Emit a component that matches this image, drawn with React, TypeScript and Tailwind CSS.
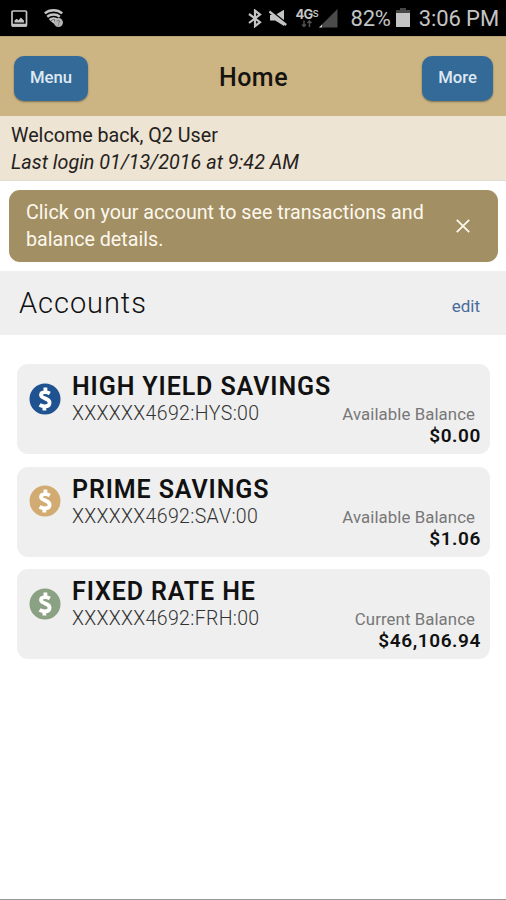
type Account = {
  name: string;
  number: string;
  balanceLabel: string;
  balance: string;
  iconClass: string;
};

const accounts: Account[] = [
  {
    name: "HIGH YIELD SAVINGS",
    number: "XXXXXX4692:HYS:00",
    balanceLabel: "Available Balance",
    balance: "$0.00",
    iconClass: "text-[#1f5291]",
  },
  {
    name: "PRIME SAVINGS",
    number: "XXXXXX4692:SAV:00",
    balanceLabel: "Available Balance",
    balance: "$1.06",
    iconClass: "text-[#d2ab72]",
  },
  {
    name: "FIXED RATE HE",
    number: "XXXXXX4692:FRH:00",
    balanceLabel: "Current Balance",
    balance: "$46,106.94",
    iconClass: "text-[#8ba183]",
  },
];

function StatusBar() {
  return (
    <div className="flex h-9 items-center bg-black pl-[10px] pr-[7px] text-[#c4c4c4]">
      <svg width="18" height="18" viewBox="0 0 18 18" className="mt-px" aria-hidden>
        <rect x="2" y="1" width="14.5" height="15" rx="1" fill="none" stroke="currentColor" strokeWidth="1.7" />
        <path d="M2 15.2h14.5" stroke="currentColor" strokeWidth="3" />
        <path d="M4.5 12.5v-2l2.2-1.8 1.8 1.5 2.4-2.7 3.1 3.3v1.7z" fill="currentColor" />
      </svg>
      <svg width="20" height="19" viewBox="0 0 20 19" className="ml-4" fill="none" stroke="currentColor" aria-hidden>
        <path d="M.8 4.4C5.5.3 13.5.3 18.2 4.4M3.2 7.7c3.5-2.9 9.1-2.9 12.6 0M5.6 11c2.2-1.9 5.6-1.9 7.8 0" strokeWidth="2.5" />
        <path d="M6.5 12l3.5-1.5 1 5z" fill="currentColor" stroke="none" />
        <circle cx="14.5" cy="13.6" r="4.5" fill="#b4b4b4" stroke="none" />
        <path d="M13 12.4c.2-1.4 2.8-1.3 2.7.2-.1.9-1.2.9-1.2 1.9M14.5 15.5v1" stroke="#666" strokeWidth="1" />
      </svg>

      <div className="ml-auto flex items-center">
        <svg width="14" height="19" viewBox="0 0 14 19" fill="none" stroke="currentColor" strokeWidth="2.2" aria-hidden>
          <path d="M1 5l11 8.2-5 4V1.6l5 4L1 14" />
        </svg>
        <svg width="18" height="18" viewBox="0 0 18 18" className="ml-[7px]" aria-hidden>
          <path d="M1 6h5.2L15 .8V17l-8.8-5.4H1z" fill="currentColor" />
          <path d="M1 1.2L18 14.8" stroke="#000" strokeWidth="2" />
          <path d="M.3 2.4L17.2 16" stroke="currentColor" strokeWidth="2.4" />
        </svg>
        <div className="ml-[7px] flex w-[25px] flex-col items-center">
          <div className="flex h-[11px] items-start">
            <span className="font-[Inter,sans-serif] text-[13px] font-bold leading-[10px] tracking-[-0.6px]">4G</span>
            <span className="font-[Inter,sans-serif] text-[9px] font-semibold leading-[9px]">S</span>
          </div>
          <svg width="12" height="8" viewBox="0 0 12 8" fill="none" stroke="#505050" strokeWidth="1.5" aria-hidden>
            <path d="M3 .5v6M1 4.5l2 2 2-2M8.5 7V1M6.5 3l2-2 2 2" />
          </svg>
        </div>
        <svg width="19" height="19" viewBox="0 0 19 19" aria-hidden>
          <path d="M18.5 0v18.5H0z" fill="#4b4b4b" />
          <path d="M3 15.5v3H0z" fill="#c4c4c4" />
        </svg>
        <span className="ml-3 mt-0.5 text-[22px] leading-9 tracking-[-0.2px]">82%</span>
        <svg width="14" height="20" viewBox="0 0 14 20" className="ml-[5px]" aria-hidden>
          <path d="M4 0h6v2h4v4H0V2h4z" fill="#464646" />
          <path d="M0 5h14v14H0z" fill="currentColor" />
        </svg>
        <span className="ml-[9px] mt-0.5 text-[22px] leading-9 tracking-[-0.1px]">3:06 PM</span>
      </div>
    </div>
  );
}

function HeaderButton({ label, className }: { label: string; className: string }) {
  return (
    <button
      type="button"
      className={`h-[45px] rounded-[10px] bg-[#346a98] pb-px text-[16.7px] font-medium text-[#dfe9f3] shadow-[0_1px_2px_rgba(70,70,50,0.6)] ${className}`}
    >
      {label}
    </button>
  );
}

function AccountIcon({ className }: { className: string }) {
  return (
    <svg width="32" height="32" viewBox="0 0 32 32" className={`shrink-0 ${className}`} aria-hidden>
      <circle cx="16" cy="16" r="15.5" fill="currentColor" />
      <path
        d="M20.8 10.5c-1.5-.9-3.2-1.4-4.8-1.3-2.5.1-4 1.1-4 2.9 0 1.9 1.9 2.6 4 3.3 2.4.9 4.6 1.9 4.6 4.3s-1.8 3.6-4.9 3.6c-1.8 0-3.6-.5-5.1-1.4M16.4 4.4v5M15.4 23v4.6"
        fill="none"
        stroke="#fff"
        strokeWidth="3.8"
      />
    </svg>
  );
}

function AccountCard({ account }: { account: Account }) {
  return (
    <div className="flex h-[90px] rounded-[11px] bg-[#efefef] pl-3 pr-[9px]">
      <AccountIcon className={`mt-[18.5px] ${account.iconClass}`} />
      <div className="ml-[11px] flex-1 whitespace-nowrap pt-2">
        <h3 className="text-[25px] font-semibold leading-[29px] tracking-[0.9px] text-[#111]">{account.name}</h3>
        <div className="flex justify-between">
          <p className="text-[19.5px] font-light leading-[26px] tracking-[0.33px] text-[#333] [font-kerning:none]">
            {account.number}
          </p>
          <div className="flex flex-col items-end pt-[3px]">
            <span className="mr-[6px] text-[16.8px] leading-[21px] tracking-[0.08px] text-[#777]">
              {account.balanceLabel}
            </span>
            <span className="text-[19px] font-semibold leading-[22px] tracking-[0.6px] text-[#111]">
              {account.balance}
            </span>
          </div>
        </div>
      </div>
    </div>
  );
}

export default function App() {
  return (
    <div className="flex h-[900px] w-[506px] flex-col overflow-hidden border-b border-[#999] bg-white font-[Roboto,sans-serif]">
      <StatusBar />

      <header className="flex h-20 items-center justify-between border-t border-[#b8a277] bg-[#cdb483] pl-[14px] pr-[13px] pt-[3px]">
        <HeaderButton label="Menu" className="w-[74px]" />
        <h1 className="pb-px pr-[3px] text-[25px] font-medium tracking-[0.5px] text-[#151310]">Home</h1>
        <HeaderButton label="More" className="w-[71px]" />
      </header>

      <section className="h-[65px] border-b border-[#dfdbd2] bg-[#ede4d3] pl-[11px] pt-[6px] leading-[27px] text-[#25211c]">
        <p className="text-[19.7px]">Welcome back, Q2 User</p>
        <p className="text-[19.8px] italic">Last login 01/13/2016 at 9:42 AM</p>
      </section>

      <div className="mx-[9px] mr-2 mt-[9px] flex h-[72px] shrink-0 items-center rounded-[11px] bg-[#a38f64] pl-[17px] pr-7 text-[19.7px] leading-[27px] text-[#fdf8ee]">
        <p className="flex-1 whitespace-nowrap pb-px">
          Click on your account to see transactions and
          <br />
          balance details.
        </p>
        <button type="button" aria-label="Dismiss">
          <svg width="14" height="14" viewBox="0 0 14 14" stroke="currentColor" strokeWidth="1.8" aria-hidden>
            <path d="M.8.8l12.4 12.4M13.2.8L.8 13.2" />
          </svg>
        </button>
      </div>

      <div className="mt-[9px] flex h-16 shrink-0 items-center justify-between bg-[#efefef] pl-[19px] pr-[26px]">
        <h2 className="pt-px text-[29px] font-light tracking-[0.95px] text-[#111]">Accounts</h2>
        <a className="pt-[7px] text-[17px] text-[#476c9c]">edit</a>
      </div>

      <main className="flex flex-1 flex-col gap-[12.5px] pl-[17px] pr-4 pt-[29px]">
        {accounts.map((account) => (
          <AccountCard key={account.number} account={account} />
        ))}
      </main>
    </div>
  );
}
